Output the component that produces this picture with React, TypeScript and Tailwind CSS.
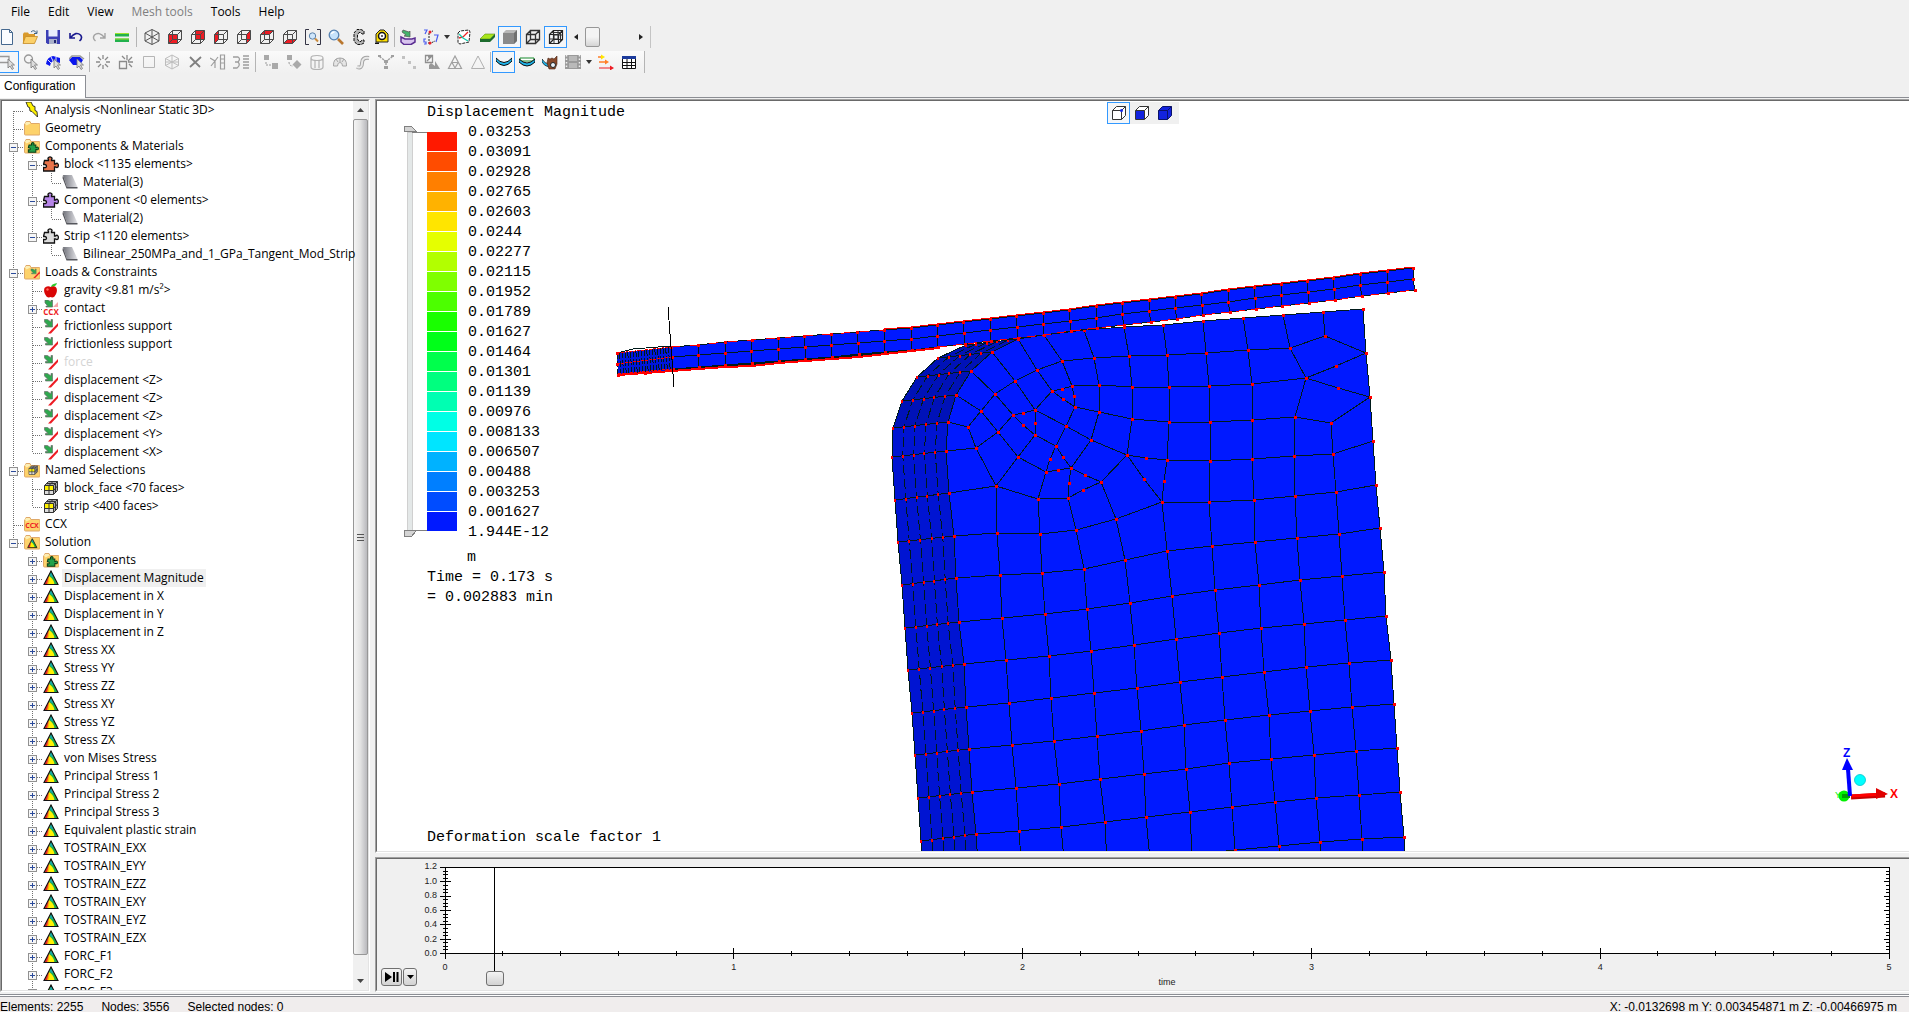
import type { ReactNode } from "react";

type TreeItem = {
    label: string;
    icon: string;
    open?: boolean;
    closed?: boolean;
    muted?: boolean;
    selected?: boolean;
    children?: TreeItem[];
};

type Tool = { icon?: string; label?: string; on?: boolean; sep?: "wide" | "tight"; drop?: boolean };

type Point = [number, number];

const ui = "font-['Open_Sans','Noto_Sans',sans-serif]";
const arial = "font-['Liberation_Sans',Arial,sans-serif]";
const mono = "font-['Liberation_Mono','Courier_New',monospace]";

const cubeWire = "M1.5 5.5h9v9h-9zM5.5 1.5h9v9h-9zM1.5 5.5l4-4M10.5 5.5l4-4M1.5 14.5l4-4M10.5 14.5l4-4";

function cube(face: string) {
    return (
        <>
            <path d={face} fill="#ed1c24" />
            <path d={cubeWire} fill="none" stroke="#4a4a4a" />
        </>
    );
}

function folder(mark?: ReactNode) {
    return (
        <>
            <path d="M1 3.5l1-2h4l1 2h8q1 0 1 1V14q0 1-1 1H1.500q-1 0-1-1V4z" fill="#fdd26b" stroke="#dfa86a" />
            <path d="M1 3.500l1-1.500h3.500l1 1.500-4 2z" fill="#fdeeb5" />
            {mark}
        </>
    );
}

const puzzlePath = "M1.500 4.500h4V3.500q-1-1 0-2 1.500-1.200 3 0 1 1 0 2v1h3v3.500h1q1.500-1.500 2.500 0 .8 1.500 0 3-1 1-2.500 0h-1v4h-11v-3.500h1q1.500.5 2-1 0-2-2-2h-1z";

function puzzle(fill: string) {
    return <path d={puzzlePath} fill={fill} stroke="#111" strokeWidth="1.300" />;
}

const constraint = (
    <>
        <path d="M1.500 1.500h3L8 4V1.500h1.500V9H2.500V7.500H5L1.500 4z" fill="#2fa84f" stroke="#6b6b6b" strokeWidth=".7" />
        <path d="M5 15.500L15 5v3L8 15.500z" fill="#ed1c24" />
    </>
);

const resultTriangle = (
    <>
        <path d="M8 1l7 13.500H1z" fill="#e8262a" />
        <path d="M8 1l7 13.500H4L6 5z" fill="#fbb40f" />
        <path d="M8 1l7 13.500H5q2-3 1-8z" fill="#fff200" />
        <path d="M8 1l7 13.500h-3.500Q11 9 6 6z" fill="#1fae4a" />
        <path d="M8 1l3 6Q9 8 6.500 5z" fill="#19a9a0" />
        <path d="M8 1l7 13.500H1z" fill="none" stroke="#111" strokeWidth="1.100" />
    </>
);

const blocks = (
    <>
        <path d="M1.500 5.500l4-4h9v9l-4 4h-9z" fill="#a8a8a8" stroke="#333" />
        <path d="M2 6h8v4.500H2z" fill="#fff200" />
        <path d="M2 10.500h8V14H2z" fill="#ddd" />
        <path d="M1.500 5.500h9v9M6 5.500v9M1.500 10.500h9l4-4.500M10.500 5.500l4-4M6 5.500l4-4M3.500 3.500h9V12" fill="none" stroke="#333" />
    </>
);

const cursor = <path d="M8 5v9l2-2 2 3.500 1.500-1-2-3.500h3z" fill="#ddd" stroke="#777" strokeWidth=".8" />;

const icons: Record<string, ReactNode> = {
    new: <path d="M2.500.5h8l3 3v12h-11zM10.500.5v3h3" fill="#fafcff" stroke="#45688f" />,
    open: (
        <>
            <path d="M1 5l1-1.500h4L7 5h6v9H1z" fill="#d99a2b" />
            <path d="M3.500 7.500h12l-3 7H1z" fill="#fbd069" stroke="#c48a26" strokeWidth=".8" />
            <path d="M9 3q3-3 5.500 1M15 1.500V4.500h-3" fill="none" stroke="#3f6385" />
        </>
    ),
    save: (
        <>
            <path d="M1 1h14v14H2.500L1 13.500z" fill="#3b3fb5" />
            <path d="M3.500 1h9v6.500h-9z" fill="#e8eefc" />
            <path d="M4 10h8v5H4z" fill="#a9b0c9" />
            <path d="M9 11h2v3H9z" fill="#20246f" />
        </>
    ),
    undo: <path d="M2 4v5h5M2.500 8.500Q8 2 12.500 6q2.500 3-1 6" fill="none" stroke="#1a1a8e" strokeWidth="1.600" />,
    redo: <path d="M14 4v5H9M13.500 8.500Q8 2 3.500 6q-2.500 3 1 6" fill="none" stroke="#a3a3a3" strokeWidth="1.400" />,
    equal: (
        <>
            <path d="M1 4h14v3.500H1zM1 9.500h14V13H1z" fill="#22b14c" />
            <path d="M1 4h14v1H1zM1 9.500h14v1H1z" fill="#9be22b" />
        </>
    ),
    iso: <path d="M8 .5l7 3.500v8L8 15.500 1 12V4zM8 .5v15M1 4l14 8M15 4L1 12" fill="none" stroke="#555" />,
    front: cube("M1.500 5.500h9v9h-9z"),
    back: cube("M5.500 1.500h9v9h-9z"),
    left: cube("M1.500 5.500l4-4v9l-4 4z"),
    right: cube("M10.500 5.500l4-4v9l-4 4z"),
    top: cube("M1.500 5.500l4-4h9l-4 4z"),
    bottom: cube("M1.500 14.500l4-4h9l-4 4z"),
    fit: (
        <>
            <path d="M4 .5H.500V15.500H4M12 .5h3.500V15.500H12" fill="none" stroke="#334" />
            <circle cx="7.500" cy="7" r="3.200" fill="#cfe6fb" stroke="#5c82ab" />
            <path d="M10 9.500l3 3" stroke="#c98a3c" strokeWidth="2" />
        </>
    ),
    zoom: (
        <>
            <circle cx="6" cy="6" r="4.800" fill="#c6e2fb" stroke="#5580b0" strokeWidth="1.300" />
            <path d="M3.500 5Q4 3 6.500 3" stroke="#fff" strokeWidth="1.500" fill="none" />
            <path d="M10 10l5 5" stroke="#b9772f" strokeWidth="2.600" />
        </>
    ),
    clamp: <path d="M13 5V2L10 .5H6L3 4v8l3 3.500h4l3-1.500v-3h-2l-1 1.500H8L6.500 10V6L8 3.500h2L11 5z" fill="#b5b5b5" stroke="#111" strokeDasharray="3 1" />,
    tape: (
        <>
            <path d="M2 13V5l4-4h4l4 4v8z" fill="#ffe000" stroke="#222" />
            <circle cx="8" cy="7" r="3.500" fill="#fff" stroke="#111" strokeWidth="1.500" />
            <circle cx="8" cy="7" r="1" fill="#333" />
            <path d="M1 13.500h4v1.500H1z" fill="#111" />
        </>
    ),
    section: (
        <>
            <path d="M1 8l4 2h7l3-1v4l-4 2.500H4L1 13z" fill="#d8c4ee" stroke="#5a2d91" strokeWidth="1.500" />
            <path d="M3 1l6 2 1-1v6L4 7l2-1-4-3z" fill="#43b26b" stroke="#555" strokeWidth=".7" />
        </>
    ),
    axes: (
        <>
            <path d="M6 15V3l4-1M6 15l6-3" fill="none" stroke="#222" strokeDasharray="2 1" />
            <path d="M1 1h3L2 5M3 10H1v3h2v2H1M11 6h4l-2 7" fill="none" stroke="#4a5cf0" strokeWidth="1.200" />
            <circle cx="7" cy="3" r="1.500" fill="#ed1c24" />
            <circle cx="7" cy="14" r="1.500" fill="#ed1c24" />
        </>
    ),
    graph: (
        <>
            <path d="M2 4l2-2 9-1 1 2-1 10-9 2-2-1z" fill="#fff" stroke="#222" strokeDasharray="3 1" />
            <path d="M3 9l4-1 5-5" stroke="#e22" fill="none" strokeWidth="1.300" />
            <path d="M3 5l4 4 5 3" stroke="#1ca" fill="none" strokeWidth="1.300" />
        </>
    ),
    slab: (
        <>
            <path d="M1 10l5-5h10l-5 5z" fill="#a8e61d" stroke="#5c8f10" strokeWidth=".6" />
            <path d="M1 10h10v3H1zM11 10l5-5v3l-5 5z" fill="#1d6b2e" />
        </>
    ),
    shaded: (
        <>
            <path d="M1 4l3-3h11v11l-3 3H1z" fill="#b8b8b8" />
            <path d="M1 4h11v11H1z" fill="#8a8a8a" />
            <path d="M12 4l3-3v11l-3 3z" fill="#6f6f6f" />
        </>
    ),
    wire: <path d={cubeWire} fill="none" stroke="#333" strokeWidth="1.300" />,
    meshcube: (
        <>
            <path d={cubeWire} fill="none" stroke="#222" strokeWidth="1.200" />
            <path d="M6 5.500v9M1.500 10h9M10 1.500v9M5.500 6h9M3.500 3.500h9v9" fill="none" stroke="#333" />
        </>
    ),
    selRect: (
        <>
            <path d="M0 2.500h9v6H0" fill="none" stroke="#999" strokeWidth="1.300" />
            {cursor}
        </>
    ),
    selCircle: (
        <>
            <circle cx="5.500" cy="5" r="4" fill="none" stroke="#999" strokeWidth="1.300" />
            {cursor}
        </>
    ),
    selStrip: (
        <>
            <path d="M0 10Q1 3 7 2l7 2v5L8 7q-3 0-4 5z" fill="#0b16ee" />
            <path d="M5 3l2 4M2 6l3 3M10 3v4" stroke="#dfe4ff" />
            {cursor}
        </>
    ),
    selSolid: (
        <>
            <path d="M0 6l3-3h8l3 3-3 5H4z" fill="#0b16ee" />
            <path d="M0 5l3-3h8l4 3" fill="none" stroke="#999" strokeWidth="1.500" />
            {cursor}
        </>
    ),
    burst: <path d="M8 1v4M8 11v4M1 8h4M11 8h4M3 3l3 3M10 10l3 3M13 3l-3 3M3 13l3-3" stroke="#8a8a8a" strokeWidth="1.300" />,
    burstBox: (
        <>
            <path d="M1.500 7.500h7v7h-7z" fill="none" stroke="#8a8a8a" strokeWidth="1.300" />
            <path d="M9 6V1M10 7l4-4M10 8h5M7 5L4 2M11 10l3 3" stroke="#8a8a8a" strokeWidth="1.300" />
        </>
    ),
    box: <path d="M2.500 2.500h11v11h-11z" fill="none" stroke="#b5b5b5" />,
    isoGrey: <path d="M8 1l6.500 3.500v7L8 15l-6.500-3.500v-7zM8 1v14M1.500 4.500l13 7M14.500 4.500l-13 7M1.500 8h13" fill="none" stroke="#bdbdbd" />,
    cross: <path d="M3 3l10 10M14 3L3 13" stroke="#808080" strokeWidth="1.800" />,
    align: <path d="M0 4l5 3-4 5M5 7l3-4M5 7v7M10.500 1v14h4V1zM11 5h3M11 9h3" fill="none" stroke="#9d9d9d" strokeWidth="1.200" />,
    spring: <path d="M0 3h5q3 2 0 5 3 3-1 6H0M2 8h4M10 2h6M10 5h6M10 8h6M10 11h6M10 14h6" fill="none" stroke="#9d9d9d" strokeWidth="1.300" />,
    stairs: (
        <>
            <path d="M1 1h5v5H1zM9 9h6v6H9z" fill="#a9a9a9" />
            <path d="M3 8v3h5" fill="none" stroke="#999" strokeDasharray="2 1" />
        </>
    ),
    rotateBox: (
        <>
            <path d="M1 1h5v5H1zM11 6l4.500 4.500L11 15l-4.500-4.500z" fill="#a9a9a9" />
            <path d="M3 8q0 4 4 4" fill="none" stroke="#999" strokeDasharray="2 1" />
        </>
    ),
    drum: <path d="M2 4q0-2.500 6-2.500T14 4t-6 2.500T2 4v9q0 2.500 6 2.500t6-2.500V4M6 7v7M10 7v7" fill="none" stroke="#b3b3b3" strokeWidth="1.200" />,
    arch: <path d="M1.500 12Q1 4 8 4t6.500 8h-4Q10.500 8.500 8 8.500T5.500 12zM4 5l2 3M12 5l-2 3M8 4v4" fill="#e5e5e5" stroke="#a6a6a6" />,
    snake: (
        <>
            <path d="M2 13q5 2 5-4t7-5" fill="none" stroke="#a3a3a3" strokeWidth="4" />
            <path d="M2 13q5 2 5-4t7-5" fill="none" stroke="#e8e8e8" strokeWidth="2" />
        </>
    ),
    merge: (
        <>
            <path d="M1 2l5 4M15 2l-5 4M8 15V8" stroke="#a0a0a0" strokeDasharray="3 1" strokeWidth="1.500" />
            <path d="M6 6h4v3H6zM0 1h3v2H0zM13 1h3v2h-3zM6 12h4v3H6z" fill="#a0a0a0" />
        </>
    ),
    dots: <path d="M1 2h3v3H1zM7 7h3v3H7zM12 12h3v3h-3z" fill="#c2c2c2" />,
    scale: (
        <>
            <path d="M1.500 1.500h7v7h-7zM3 7l4-4H4" fill="none" stroke="#8f8f8f" strokeWidth="1.300" />
            <path d="M7 9l4 3V7l5 8H5v-4z" fill="#999" />
        </>
    ),
    triangles: <path d="M8 2l6.500 12.500h-13zM5 8.500h6M8 14l-3-5.500M8 14l3-5.500" fill="none" stroke="#a0a0a0" strokeWidth="1.200" />,
    triangle: <path d="M8 2l6.500 12.500h-13z" fill="none" stroke="#b0b0b0" />,
    curve: <path d="M0 4q8 9 16 0v3q-8 9-16 0z" fill="#1fb5ec" stroke="#0a0a0a" />,
    curveOverlay: (
        <>
            <path d="M1 4h14v3H1z" fill="#fff" stroke="#178a2c" />
            <path d="M0 5q8 8 16 0v3q-8 8-16 0z" fill="#1fb5ec" stroke="#0a0a0a" />
        </>
    ),
    bull: (
        <>
            <path d="M0 5q3 5 7 5v3Q2 12 0 8z" fill="#1fb5ec" stroke="#111" strokeWidth=".7" />
            <path d="M6 4l2 1 2-1 2 1 3-3v8l-2 5H7L5 9z" fill="#87492b" stroke="#4a2413" strokeWidth=".6" />
            <circle cx="11" cy="11" r="2.500" fill="#e8f3fb" stroke="#222" />
        </>
    ),
    film: (
        <>
            <path d="M0 1h16v14H0z" fill="#9a9a9a" />
            <path d="M4 2h8v5H4zM4 9h8v5H4z" fill="#b9b9b9" />
            <path d="M1.500 1v14M14.500 1v14" stroke="#efefef" strokeWidth="1.500" strokeDasharray="1.500 2" />
        </>
    ),
    arrows: (
        <>
            <path d="M0 3h4M1 8h7" stroke="#ff7f27" strokeWidth="1.300" />
            <path d="M3 0.500L7 3 3 5.500z" fill="#ffe600" />
            <path d="M7 5.500L11 8l-4 2.500z" fill="#ff7f27" />
            <path d="M1 13.500h12v1H1zM12 11.500l4 2.500-4 2.500z" fill="#ed1c24" />
        </>
    ),
    table: (
        <>
            <path d="M1.500 2.500h13v12h-13z" fill="#fff" stroke="#111" />
            <path d="M1 2h14v3H1z" fill="#1d3c9c" />
            <path d="M1 8.500h14M1 11.500h14M6 5v9.500M10.500 5v9.500" stroke="#111" />
        </>
    ),
    bolt: <path d="M2 0h5l2 4 2 .5v4l2 1L13.500 15 8 9.500 6 9l-.5-3.500L4 5z" fill="#fff200" stroke="#222" strokeWidth=".9" />,
    folder: folder(),
    folderParts: folder(
        <g transform="translate(4 4) scale(.68)">
            <path d={puzzlePath} fill="#22a14a" stroke="#0b3d18" strokeWidth="1.500" />
        </g>,
    ),
    folderLoads: folder(<g transform="translate(6 4) scale(.65)">{constraint}</g>),
    folderSel: folder(<g transform="translate(4 3) scale(.65)">{blocks}</g>),
    folderCcx: folder(
        <text x="8" y="11.500" fontSize="7" fontWeight="bold" textAnchor="middle" fill="#ed1c24">CCX</text>,
    ),
    folderSolution: folder(<g transform="translate(3 4) scale(.66)">{resultTriangle}</g>),
    partOrange: puzzle("#e8734a"),
    partPurple: puzzle("#b685e8"),
    partGrey: puzzle("#dcdcdc"),
    material: (
        <>
            <path d="M1 1h9l5.500 12H5z" fill="url(#steel)" />
            <path d="M1 1l4 12h10.500v1.500H4.500L.500 4z" fill="#55565c" />
        </>
    ),
    apple: (
        <>
            <path d="M8 5Q8 2 14 1q-1 4-6 4z" fill="#2ecc2e" />
            <path d="M8 5q4-2 5.500 1 1.500 4-2 8.500-2 1.500-4 .5-2 1-4-.5Q0 10 1.500 6 4 3 8 5z" fill="#d90606" />
            <circle cx="4.500" cy="7.500" r="1.200" fill="#ff6a5c" />
        </>
    ),
    contact: (
        <>
            <path d="M10 7l5-5v5z" fill="#f6a5aa" />
            <path d="M2 0h3l3 2V0h1.500v7H3V6h2L2 3z" fill="#2fa84f" stroke="#6b6b6b" strokeWidth=".7" />
            <text x="8" y="15" fontSize="8" fontWeight="bold" textAnchor="middle" fill="#ed1c24">CCX</text>
        </>
    ),
    constraint,
    blocks,
    result: resultTriangle,
    viewWire: (
        <>
            <path d="M1.500 5.500l4-4h9v9l-4 4h-9zM1.500 5.500h9v9M10.500 5.500l4-4" fill="#fff" stroke="#333" />
            <circle cx="10.500" cy="5.500" r="1.500" fill="#1425e8" />
        </>
    ),
    viewFace: (
        <>
            <path d="M1.500 5.500l4-4h9v9l-4 4h-9z" fill="#fff" stroke="#333" />
            <path d="M2 6h8v8H2z" fill="#1222dd" />
            <path d="M1.500 5.500h9v9M10.500 5.500l4-4" fill="none" stroke="#333" />
        </>
    ),
    viewSolid: (
        <>
            <path d="M1.500 5.500l4-4h9v9l-4 4h-9z" fill="#1222dd" stroke="#0a1266" />
            <path d="M1.500 5.500h9v9M10.500 5.500l4-4" fill="none" stroke="#0a1266" />
        </>
    ),
};

function Icon({ name }: { name: string }) {
    return (
        <svg viewBox="0 0 16 16" className="size-4 shrink-0" aria-hidden="true">
            {icons[name]}
        </svg>
    );
}

const menus = ["File", "Edit", "View", "Mesh tools", "Tools", "Help"];

const viewTools: Tool[] = [
    { icon: "new", label: "New" },
    { icon: "open", label: "Open" },
    { icon: "save", label: "Save" },
    { icon: "undo", label: "Undo" },
    { icon: "redo", label: "Redo" },
    { icon: "equal", label: "Solve" },
    { sep: "wide" },
    { icon: "iso", label: "Isometric" },
    { icon: "front", label: "Front" },
    { icon: "back", label: "Back" },
    { icon: "left", label: "Left" },
    { icon: "right", label: "Right" },
    { icon: "top", label: "Top" },
    { icon: "bottom", label: "Bottom" },
    { icon: "fit", label: "Fit to window" },
    { icon: "zoom", label: "Zoom" },
    { icon: "clamp", label: "Caliper" },
    { icon: "tape", label: "Tape measure" },
    { sep: "tight" },
    { icon: "section", label: "Cutting plane" },
    { icon: "axes", label: "Coordinate system" },
    { drop: true, label: "Coordinate options" },
    { icon: "graph", label: "Local axes" },
    { icon: "slab", label: "Shell thickness" },
    { icon: "shaded", label: "Shaded", on: true },
    { icon: "wire", label: "Wireframe" },
    { icon: "meshcube", label: "Element edges", on: true },
];

const meshTools: Tool[] = [
    { icon: "selRect", label: "Rectangle select", on: true },
    { icon: "selCircle", label: "Circle select" },
    { icon: "selStrip", label: "Select faces" },
    { icon: "selSolid", label: "Select elements" },
    { sep: "tight" },
    { icon: "burst", label: "New node" },
    { icon: "burstBox", label: "New element" },
    { icon: "box", label: "Quad" },
    { icon: "isoGrey", label: "Hex" },
    { icon: "cross", label: "Delete" },
    { icon: "align", label: "Align" },
    { icon: "spring", label: "Spring" },
    { sep: "wide" },
    { icon: "stairs", label: "Move" },
    { icon: "rotateBox", label: "Rotate" },
    { icon: "drum", label: "Revolve" },
    { icon: "arch", label: "Hollow" },
    { icon: "snake", label: "Sweep" },
    { icon: "merge", label: "Merge nodes" },
    { icon: "dots", label: "Mirror" },
    { icon: "scale", label: "Scale" },
    { icon: "triangles", label: "Refine" },
    { icon: "triangle", label: "Coarsen" },
    { sep: "tight" },
    { icon: "curve", label: "Deformed", on: true },
    { icon: "curveOverlay", label: "Deformed and undeformed" },
    { icon: "bull", label: "True scale" },
    { icon: "film", label: "Animate" },
    { drop: true, label: "Animation options" },
    { icon: "arrows", label: "Vectors" },
    { icon: "table", label: "Table" },
];

const results = [
    "Displacement in X", "Displacement in Y", "Displacement in Z",
    "Stress XX", "Stress YY", "Stress ZZ", "Stress XY", "Stress YZ", "Stress ZX",
    "von Mises Stress", "Principal Stress 1", "Principal Stress 2", "Principal Stress 3",
    "Equivalent plastic strain",
    "TOSTRAIN_EXX", "TOSTRAIN_EYY", "TOSTRAIN_EZZ", "TOSTRAIN_EXY", "TOSTRAIN_EYZ", "TOSTRAIN_EZX",
    "FORC_F1", "FORC_F2", "FORC_F3",
];

const tree: TreeItem[] = [
    { label: "Analysis <Nonlinear Static 3D>", icon: "bolt" },
    { label: "Geometry", icon: "folder" },
    {
        label: "Components & Materials", icon: "folderParts", open: true,
        children: [
            { label: "block <1135 elements>", icon: "partOrange", open: true, children: [{ label: "Material(3)", icon: "material" }] },
            { label: "Component <0 elements>", icon: "partPurple", open: true, children: [{ label: "Material(2)", icon: "material" }] },
            { label: "Strip <1120 elements>", icon: "partGrey", open: true, children: [{ label: "Bilinear_250MPa_and_1_GPa_Tangent_Mod_Strip", icon: "material" }] },
        ],
    },
    {
        label: "Loads & Constraints", icon: "folderLoads", open: true,
        children: [
            { label: "gravity <9.81 m/s²>", icon: "apple" },
            { label: "contact", icon: "contact", closed: true },
            { label: "frictionless support", icon: "constraint" },
            { label: "frictionless support", icon: "constraint" },
            { label: "force", icon: "constraint", muted: true },
            { label: "displacement <Z>", icon: "constraint" },
            { label: "displacement <Z>", icon: "constraint" },
            { label: "displacement <Z>", icon: "constraint" },
            { label: "displacement <Y>", icon: "constraint" },
            { label: "displacement <X>", icon: "constraint" },
        ],
    },
    {
        label: "Named Selections", icon: "folderSel", open: true,
        children: [
            { label: "block_face <70 faces>", icon: "blocks" },
            { label: "strip <400 faces>", icon: "blocks" },
        ],
    },
    { label: "CCX", icon: "folderCcx" },
    {
        label: "Solution", icon: "folderSolution", open: true,
        children: [
            { label: "Components", icon: "folderParts", closed: true },
            { label: "Displacement Magnitude", icon: "result", closed: true, selected: true },
            ...results.map((label) => ({ label, icon: "result", closed: true })),
        ],
    },
];

const legend: [string, string][] = [
    ["0.03253", "#ff1900"],
    ["0.03091", "#ff4c00"],
    ["0.02928", "#ff7f00"],
    ["0.02765", "#ffb200"],
    ["0.02603", "#ffe500"],
    ["0.0244", "#e5ff00"],
    ["0.02277", "#b2ff00"],
    ["0.02115", "#7fff00"],
    ["0.01952", "#4cff00"],
    ["0.01789", "#19ff00"],
    ["0.01627", "#00ff19"],
    ["0.01464", "#00ff4c"],
    ["0.01301", "#00ff7f"],
    ["0.01139", "#00ffb2"],
    ["0.00976", "#00ffe5"],
    ["0.008133", "#00e5ff"],
    ["0.006507", "#00b2ff"],
    ["0.00488", "#007fff"],
    ["0.003253", "#004cff"],
    ["0.001627", "#0019ff"],
    ["1.944E-12", ""],
];

// Mesh coordinates are in window pixels; the model's viewBox starts at the canvas corner.
const pts = (s: string): Point[] => s.split(" ").map((p) => p.split(",").map(Number) as Point);
const str = (p: Point[]) => p.map((q) => q.join(",")).join(" ");
const mix = (a: Point, b: Point, t: number): Point => [a[0] + (b[0] - a[0]) * t, a[1] + (b[1] - a[1]) * t];

const blockBack = pts("966,345 938,358 917,377 902,401 893,428 892,457 895,500 898,542 902,585 905,628 908,670 912,713 915,755 918,798 921,841 924,884");
const blockFront = pts("1018,339 992,352 971,371 956,395 948,422 946,451 949,493 954,536 956,578 959,622 964,664 966,707 969,749 972,792 976,834 979,877");
const blockTop = pts("1018,339 1044,335 1084,330 1124,327 1163,325 1203,321 1243,318 1283,315 1323,312 1363,309");
const blockRight = pts("1363,309 1366,353 1370,397 1373,441 1376,485 1380,528 1384,572 1386,616 1391,660 1394,704 1397,748 1400,792 1404,837 1407,880");

const gridRows = [
    "954,536 997,533 1040,534 1076,530 1116,519 1162,502 1209,502 1254,500 1295,496 1336,492 1376,485",
    "956,578 1000,575 1042,573 1084,569 1125,560 1167,551 1212,546 1255,542 1297,538 1339,534 1380,528",
    "959,622 1002,618 1045,614 1087,609 1130,603 1172,596 1215,590 1259,585 1300,580 1342,576 1384,572",
    "964,664 1006,660 1049,656 1091,651 1134,645 1176,639 1219,633 1261,628 1304,624 1345,620 1386,616",
    "966,707 1009,703 1051,698 1094,693 1137,688 1180,682 1222,677 1264,672 1306,667 1349,663 1391,660",
    "969,749 1012,745 1054,741 1097,736 1141,731 1184,725 1225,720 1269,715 1310,711 1352,707 1394,704",
    "972,792 1016,788 1059,784 1100,779 1144,774 1186,769 1229,763 1271,759 1314,755 1356,751 1397,748",
    "976,834 1019,831 1061,827 1105,822 1146,817 1190,812 1232,807 1275,802 1316,798 1359,795 1400,792",
    "979,877 1022,874 1065,870 1107,865 1150,860 1192,855 1235,850 1279,846 1320,842 1362,839 1404,837",
    "982,920 1025,917 1068,913 1110,908 1153,903 1195,898 1238,893 1282,889 1323,885 1365,882 1407,880",
].map(pts);
const gridCols = gridRows[0].map((_, i) => gridRows.map((r) => r[i]));

const cornerMesh = [
    "992,352 1015,381 1035,410 1066,426 1091,440 1127,455 1146,458 1167,460 1210,461 1252,459 1294,456 1333,454 1373,441",
    "971,371 995,394 1013,415 1023,425 1035,435 1056,446 1063,457 1071,468 1085,475 1101,482 1116,519",
    "956,395 981,411 998,432 1018,457 1046,472 1058,470 1071,468",
    "948,422 968,427 976,448 996,486 1038,499 1068,498 1083,490 1101,482 1127,455",
    "946,451 976,448 998,432 1013,415 1023,413 1035,410 1052,391 1062,389 1072,386 1099,385 1132,387 1169,387 1209,386 1252,384 1306,378 1336,366 1366,353",
    "949,493 996,486 1018,457 1035,435 1035,423 1035,410",
    "968,427 981,411 995,394 1015,381 1037,370 1062,361 1094,358 1129,356 1167,355 1206,353 1248,350 1290,348 1325,336 1366,353",
    "1018,339 1037,370 1052,391 1063,399 1075,407 1099,412 1132,419 1169,422 1210,422 1252,420 1295,417 1331,423 1370,397",
    "1044,335 1062,361 1072,386 1074,396 1075,407 1066,426 1056,446 1050,459 1046,472 1038,499 1040,534",
    "1084,330 1094,358 1099,385 1099,412 1091,440 1071,468 1069,483 1068,498 1076,530",
    "1124,327 1129,356 1132,387 1132,419 1127,455 1144,479 1162,502",
    "1163,325 1167,355 1169,387 1169,422 1167,460 1164,481 1162,502",
    "1203,321 1206,353 1209,386 1210,422 1210,461 1209,502",
    "1243,318 1248,350 1252,384 1252,420 1252,459 1254,500",
    "1283,315 1290,348 1306,378 1295,417 1294,456 1295,496",
    "1323,312 1325,336",
    "1306,378 1338,388 1370,397",
    "1331,423 1333,454 1336,492",
    "996,486 997,533",
].map(pts);

const stripTop = pts("671,347 698,345 725,342 752,340 778,338 804,336 831,334 857,332 884,330 911,328 937,325 963,322 990,319 1016,316 1043,313 1069,310 1096,306 1122,303 1149,300 1175,297 1201,294 1228,290 1254,287 1281,284 1307,281 1333,278 1360,274 1387,271 1413,268");
const stripMid = pts("672,357 698,355 725,353 751,351 778,349 805,347 831,345 858,343 884,341 911,339 937,336 964,333 990,330 1017,327 1043,324 1070,321 1096,318 1122,314 1149,311 1175,308 1202,305 1228,302 1255,298 1281,295 1308,292 1334,289 1360,285 1387,282 1413,279");
const stripBottom = pts("673,369 699,367 725,365 752,363 779,361 805,359 832,357 859,354 885,352 912,350 938,347 965,344 991,341 1018,338 1044,335 1071,331 1097,328 1124,325 1151,322 1177,319 1203,315 1230,312 1256,309 1282,306 1309,303 1335,300 1362,296 1388,293 1415,290");
const stripUnder = pts("618,375 645,373 672,371 698,369 725,367 752,366 779,363 805,361 832,359 859,357 885,354 912,351 938,348");

const denseColumns = Array.from({ length: 21 }, (_, i) => i / 20);
const sideSteps = [0.2, 0.4, 0.6, 0.8];

function Node({ at }: { at: Point }) {
    return <rect x={Math.round(at[0]) - 1} y={Math.round(at[1]) - 1} width="3" height="3" fill="#ff0000" />;
}

function Line({ p, color = "#001a1a", dash }: { p: Point[]; color?: string; dash?: string }) {
    return <polyline points={str(p)} fill="none" stroke={color} strokeDasharray={dash} />;
}

function Model() {
    const frontNodes = [...blockFront, ...blockTop, ...blockRight, ...gridRows.flat(), ...cornerMesh.flat()];
    return (
        <svg
            viewBox="377 101 1532 750"
            width="1532"
            height="750"
            shapeRendering="crispEdges"
            className="absolute top-0 left-0"
            role="img"
            aria-label="Deformed mesh"
        >
            <polygon points={str([...blockBack, ...[...blockFront].reverse()])} fill="#0014d2" />
            <polygon points={str([...blockBack.slice(0, 5), ...blockFront.slice(0, 5).reverse()])} fill="#0012b8" />
            <polygon points={str([...blockTop, ...blockRight, ...[...blockFront].reverse()])} fill="#0019ff" />
            <Line p={blockBack} />
            {sideSteps.map((t) => (
                <Line key={t} p={blockBack.map((b, i) => mix(b, blockFront[i], t))} dash="10 4" />
            ))}
            {blockBack.map((b, i) => <Line key={i} p={[b, blockFront[i]]} />)}
            {[blockFront, blockTop, blockRight, ...gridRows, ...gridCols, ...cornerMesh].map((p, i) => <Line key={i} p={p} />)}
            {blockBack.map((b, i) => [0, ...sideSteps].map((t) => {
                const [x, y] = mix(b, blockFront[i], t);
                return <rect key={`${i}-${t}`} x={Math.round(x) - 1} y={Math.round(y) - 1} width="2" height="3" fill="#ff0000" />;
            }))}
            {frontNodes.map((n, i) => <Node key={i} at={n} />)}

            <polygon points={str([...stripTop, ...[...stripBottom].reverse()])} fill="#0019ff" />
            <polygon points="617,353 672,347 673,370 618,376" fill="#0016dc" />
            <polygon points={str([...stripBottom.slice(0, 11), ...stripUnder.slice(2).reverse()])} fill="#001a1a" />
            <Line p={[[617, 353], [633, 349], [671, 346]]} />
            <Line p={stripTop} />
            <Line p={stripMid} />
            <Line p={stripBottom} />
            {stripTop.map((p, i) => <Line key={i} p={[p, stripMid[i], stripBottom[i]]} />)}
            {denseColumns.map((t) => (
                <Line key={t} p={[mix([617, 353], [671, 347], t), mix([618, 375], [673, 370], t)]} dash="6 2" />
            ))}
            <Line p={[[617, 353], [671, 347]]} color="#ff0000" dash="3 1" />
            <Line p={[[617, 364], [672, 357]]} color="#ff0000" dash="3 1" />
            <Line p={[[618, 374], [673, 369]]} color="#ff0000" dash="3 1" />
            <Line p={stripTop.slice(0, 9)} color="#ff0000" dash="9 10" />
            <Line p={stripTop.slice(8).map(([x, y]) => [x, y - 1])} color="#ff0000" />
            <polyline points={str(stripUnder)} fill="none" stroke="#ff0000" strokeWidth="2" />
            <Line p={stripBottom.slice(10)} color="#ff0000" dash="9 6" />
            {[...stripTop, ...stripMid, ...stripBottom].map((n, i) => <Node key={i} at={n} />)}
            {([[617, 353], [617, 364], [618, 375], [645, 373]] as Point[]).map((n, i) => <Node key={i} at={n} />)}
            <Line p={[[668, 307], [674, 387]]} color="#000" />
        </svg>
    );
}

function Triad() {
    return (
        <svg viewBox="0 0 68 62" className="absolute right-2 bottom-[42px] h-[62px] w-[68px] overflow-visible" role="img" aria-label="Axes">
            <path d="M18 50l34-2" stroke="#c80000" strokeWidth="5" />
            <path d="M18 49l34-2" stroke="#ff0000" strokeWidth="3" />
            <path d="M43 41l12 6-12 5z" fill="#e00000" />
            <circle cx="11" cy="49" r="5.500" fill="#00f000" />
            <path d="M9 47h8v4H9z" fill="#00a000" />
            <path d="M17 49l-2-27" stroke="#0000ff" strokeWidth="4" />
            <path d="M9 23l5-12 6 12z" fill="#0000ff" />
            <circle cx="27" cy="33" r="5.500" fill="#00ffff" stroke="#00c4cc" strokeWidth=".8" />
            <g className={arial} fontSize="13">
                <text x="10" y="10" fill="#0000ff" fontWeight="bold" fontSize="12">Z</text>
                <text x="57" y="51" fill="#ff0000" fontWeight="bold" fontSize="12">X</text>
                <text x="2" y="51" fill="#00f000" fontSize="9">Y</text>
            </g>
        </svg>
    );
}

function Sunken({ className = "", children }: { className?: string; children: ReactNode }) {
    return (
        <div className={`flex min-h-0 border border-t-[#a0a0a0] border-r-white border-b-white border-l-[#a0a0a0] ${className}`}>
            <div className="relative flex min-h-0 min-w-0 flex-1 border border-t-[#696969] border-r-[#e3e3e3] border-b-[#e3e3e3] border-l-[#696969]">
                {children}
            </div>
        </div>
    );
}

function ToolButton({ tool }: { tool: Tool }) {
    if (tool.sep) return <div className={`h-5 w-px bg-[#b4b4b4] ${tool.sep === "wide" ? "mx-[3px]" : "mx-px"}`} />;
    if (tool.drop) {
        return (
            <button type="button" aria-label={tool.label} className="flex h-[22px] w-[10px] items-center justify-center">
                <svg viewBox="0 0 6 4" className="h-1 w-1.5"><path d="M0 0h6L3 4z" fill="#333" /></svg>
            </button>
        );
    }
    return (
        <button
            type="button"
            aria-label={tool.label}
            className={`flex h-[22px] w-[23px] shrink-0 items-center justify-center border ${tool.on ? "border-[#3399ff] bg-[#f4f6f8]" : "border-transparent"}`}
        >
            <Icon name={tool.icon ?? ""} />
        </button>
    );
}

function Guide({ from, to, branch }: { from: number; to: number; branch?: boolean }) {
    return (
        <svg width="19" height="18" className="shrink-0 overflow-visible" shapeRendering="crispEdges" aria-hidden="true">
            <path d={`M11.500 ${from}V${to}`} stroke="#707070" strokeDasharray="1 1" />
            {branch && <path d="M12 10.500H22" stroke="#707070" strokeDasharray="1 1" />}
        </svg>
    );
}

function TreeRow({ item, guides, first, last }: { item: TreeItem; guides: boolean[]; first: boolean; last: boolean }) {
    return (
        <li>
            <div className="flex h-[18px] items-center">
                {guides.map((on, i) => (on ? <Guide key={i} from={0} to={18} /> : <span key={i} className="w-[19px] shrink-0" />))}
                <span className="relative flex shrink-0">
                    <Guide from={first ? 10 : 0} to={last ? 10 : 18} branch />
                    {(item.open || item.closed) && (
                        <button
                            type="button"
                            aria-label={`${item.open ? "Collapse" : "Expand"} ${item.label}`}
                            className="absolute top-1.5 left-[7px] flex size-[9px] items-center justify-center border border-[#919191] bg-[#f6f6f6]"
                        >
                            <svg viewBox="0 0 5 5" className="size-[5px] shrink-0" shapeRendering="crispEdges">
                                <path d={item.open ? "M0 2.500h5" : "M0 2.500h5M2.500 0v5"} stroke="#2b4b9b" />
                            </svg>
                        </button>
                    )}
                </span>
                <span className="ml-[3px] flex shrink-0"><Icon name={item.icon} /></span>
                <span
                    className={`ml-[3px] h-[18px] px-0.5 leading-[17px] whitespace-nowrap ${item.selected ? "bg-[#f0f0f0]" : ""} ${item.muted ? "text-[#d4d4d4]" : ""}`}
                >
                    {item.label}
                </span>
            </div>
            {item.children && <TreeList items={item.children} guides={[...guides, !last]} />}
        </li>
    );
}

function TreeList({ items, guides = [] }: { items: TreeItem[]; guides?: boolean[] }) {
    return (
        <ul>
            {items.map((item, i) => (
                <TreeRow
                    key={i}
                    item={item}
                    guides={guides}
                    first={guides.length === 0 && i === 0}
                    last={i === items.length - 1}
                />
            ))}
        </ul>
    );
}

function TreeScrollbar() {
    return (
        <div className="flex w-[15px] shrink-0 flex-col bg-[#f0f0f0]">
            <button type="button" aria-label="Scroll up" className="flex h-[18px] items-center justify-center">
                <svg viewBox="0 0 7 4" className="h-1 w-[7px]"><path d="M0 4h7L3.500 0z" fill="#444" /></svg>
            </button>
            <div className="flex flex-1 flex-col items-center justify-center gap-0.5 rounded-xs border border-[#979797] bg-linear-to-r from-[#f4f4f4] via-[#e2e2e2] to-[#b9b9bd]">
                <span className="h-px w-[7px] bg-[#555]" />
                <span className="h-px w-[7px] bg-[#555]" />
                <span className="h-px w-[7px] bg-[#555]" />
            </div>
            <button type="button" aria-label="Scroll down" className="mt-[17px] flex h-[18px] items-center justify-center">
                <svg viewBox="0 0 7 4" className="h-1 w-[7px]"><path d="M0 0h7L3.500 4z" fill="#444" /></svg>
            </button>
        </div>
    );
}

function Legend() {
    return (
        <div className={`relative flex flex-col pt-0.5 text-[15px] leading-5 ${mono}`}>
            <div className="pl-[50px]">Displacement Magnitude</div>
            <div className="flex">
                <svg width="50" height="416" shapeRendering="crispEdges" className="mt-0.5" aria-hidden="true">
                    <rect x="30" y="7" width="5" height="400" fill="#e4e8e8" stroke="#d0d0d0" />
                    <path d="M35 7.500h15M35 405.500h15" stroke="#808080" />
                    <path d="M27.500 1.500h7l5 5h-12zM27.500 405.500h12l-5 6h-7z" fill="#d4d4d4" stroke="#808080" />
                </svg>
                <div className="mt-[9px] flex w-[30px] flex-col gap-px">
                    {legend.slice(0, 20).map(([v, color]) => (
                        <div key={v} className="h-[19px]" style={{ backgroundColor: color }} />
                    ))}
                </div>
                <div className="ml-[11px]">
                    {legend.map(([v]) => <div key={v}>{v}</div>)}
                </div>
            </div>
            <div className="pt-[5px] pl-[90px]">m</div>
            <div className="pl-[50px]">Time = 0.173 s</div>
            <div className="pl-[50px]">= 0.002883 min</div>
        </div>
    );
}

const yTicks = Array.from({ length: 25 }, (_, i) => ({ y: Math.round((86 * i) / 24) + 0.5, major: i % 4 === 0 }));
const xTicks = Array.from({ length: 26 }, (_, i) => ({ x: `${i * 4}%`, major: i % 5 === 0, label: i / 5 }));

function Timeline() {
    return (
        <Sunken className="-mr-0.5 h-[135px] shrink-0">
            <div className={`flex flex-1 pt-2 pr-5 text-[9px] leading-[14px] text-[#222] ${arial}`}>
                <div className="flex w-[68px] shrink-0 flex-col justify-between">
                    <div className="-mt-2 flex h-[101px] flex-col justify-between pr-2 text-right">
                        {["1.2", "1.0", "0.8", "0.6", "0.4", "0.2", "0.0"].map((v) => <span key={v}>{v}</span>)}
                    </div>
                    <div className="flex gap-px pb-1 pl-1">
                        <button type="button" aria-label="Play or pause" className="flex h-[18px] w-[21px] items-center justify-center rounded-[3px] border border-[#707070] bg-linear-to-b from-[#f4f4f4] to-[#d2d2d2]">
                            <svg viewBox="0 0 14 10" className="h-2.5 w-3.5"><path d="M0 0l7 5-7 5zM8 0h2v10H8zM11.500 0h2v10h-2z" fill="#000" /></svg>
                        </button>
                        <button type="button" aria-label="Playback options" className="flex h-[18px] w-[14px] items-center justify-center rounded-[3px] border border-[#707070] bg-linear-to-b from-[#f4f4f4] to-[#d2d2d2]">
                            <svg viewBox="0 0 7 4" className="h-1 w-[7px]"><path d="M0 0h7L3.500 4z" fill="#000" /></svg>
                        </button>
                    </div>
                </div>
                <div className="relative min-w-0 flex-1">
                    <svg width="100%" height="120" className="block overflow-visible" shapeRendering="crispEdges" role="img" aria-label="Time axis">
                        <rect x="0" y="0" width="100%" height="86" fill="#fff" />
                        <g stroke="#000">
                            <line x1="0" x2="100%" y1=".5" y2=".5" />
                            <line x1="0" x2="100%" y1="86.500" y2="86.500" />
                            <line x1="0" x2="0" y1="0" y2="92" />
                            <line x1="100%" x2="100%" y1="0" y2="92" />
                            {yTicks.map((t) => (
                                <line key={t.y} x1={t.major ? -5 : -2} x2={t.major ? 6 : 3} y1={t.y} y2={t.y} />
                            ))}
                            <svg x="100%" className="overflow-visible">
                                {yTicks.map((t) => <line key={t.y} x1={t.major ? -5 : -3} x2="0" y1={t.y} y2={t.y} />)}
                            </svg>
                            {xTicks.map((t) => (
                                <line key={t.x} x1={t.x} x2={t.x} y1={t.major ? 81 : 84} y2={t.major ? 92 : 89} />
                            ))}
                            <line x1="3.460%" x2="3.460%" y1="0" y2="104" />
                        </g>
                        <g textAnchor="middle" fill="#222">
                            {xTicks.filter((t) => t.major).map((t) => <text key={t.x} x={t.x} y="103">{t.label}</text>)}
                            <text x="50%" y="118">time</text>
                        </g>
                    </svg>
                    <button type="button" aria-label="Time position" className="absolute top-[104px] left-[3.460%] h-[15px] w-[18px] -translate-x-1/2 rounded-[3px] border border-[#707070] bg-linear-to-b from-[#f4f4f4] to-[#d2d2d2]" />
                </div>
            </div>
        </Sunken>
    );
}

export default function App() {
    return (
        <div className={`flex h-screen flex-col overflow-hidden bg-[#f0f0f0] text-black ${ui}`}>
            <svg className="absolute size-0" aria-hidden="true">
                <linearGradient id="steel" x1="0" x2="1">
                    <stop offset="0" stopColor="#70727a" />
                    <stop offset="1" stopColor="#e6e6ea" />
                </linearGradient>
            </svg>
            <nav className="flex h-[26px] shrink-0 items-start pl-0.5 text-[12px] leading-6">
                {menus.map((m) => (
                    <button key={m} type="button" className={`px-[9px] ${m === "Mesh tools" ? "text-[#7f7f7f]" : ""}`}>{m}</button>
                ))}
            </nav>

            <div className="-ml-[5px] flex h-[22px] shrink-0 items-center">
                {viewTools.map((t, i) => <ToolButton key={i} tool={t} />)}
                <div className="flex h-[22px] items-center border-r border-[#c4c4c4]">
                    <button type="button" aria-label="Less" className="flex w-[18px] justify-center">
                        <svg viewBox="0 0 4 6" className="h-1.5 w-1"><path d="M4 0v6L0 3z" fill="#222" /></svg>
                    </button>
                    <span className="h-5 w-[15px] rounded-xs border border-[#979797] bg-linear-to-b from-[#f4f4f4] from-50% to-[#d4d4d4]" />
                    <button type="button" aria-label="More" className="ml-8 flex w-[18px] justify-center">
                        <svg viewBox="0 0 4 6" className="h-1.5 w-1"><path d="M0 0v6l4-3z" fill="#222" /></svg>
                    </button>
                </div>
            </div>
            <div className="mt-[3px] -ml-1 flex h-[22px] w-fit shrink-0 items-center border-r border-[#b4b4b4] bg-linear-to-b from-[#fafafa] to-[#f0f0f0] pr-1">
                {meshTools.map((t, i) => <ToolButton key={i} tool={t} />)}
            </div>

            <div className={`mt-0.5 flex h-[23px] shrink-0 text-[12px] ${arial}`} role="tablist">
                <button type="button" role="tab" aria-selected="true" className="w-[86px] border-t border-r border-[#8c8e94] bg-white pb-0.5 pl-1 text-left">
                    Configuration
                </button>
                <div className="flex-1 border-b border-[#8c8e94]" />
            </div>

            <main className="mt-px flex min-h-0 flex-1 gap-[5px]">
                <Sunken className="w-[370px] shrink-0">
                    <div className="flex min-w-0 flex-1 bg-white text-[12px]">
                        <div className="relative z-10 min-w-0 flex-1 overflow-x-visible overflow-y-clip">
                            <TreeList items={tree} />
                        </div>
                        <TreeScrollbar />
                    </div>
                </Sunken>
                <div className="flex min-w-0 flex-1 flex-col gap-1">
                    <Sunken className="-mr-0.5 flex-1">
                        <div className="relative flex flex-1 flex-col justify-between overflow-hidden bg-white">
                            <Model />
                            <Legend />
                            <div className={`relative pb-[3px] pl-[50px] text-[15px] leading-5 ${mono}`}>Deformation scale factor 1</div>
                            <div className="absolute top-px left-1/2 flex -translate-x-1/2 bg-[#f0f0f0] pr-[3px]">
                                <ToolButton tool={{ icon: "viewWire", label: "Select nodes", on: true }} />
                                <ToolButton tool={{ icon: "viewFace", label: "Select faces" }} />
                                <ToolButton tool={{ icon: "viewSolid", label: "Select elements" }} />
                            </div>
                            <Triad />
                        </div>
                    </Sunken>
                    <Timeline />
                </div>
            </main>

            <footer className={`mt-0.5 flex h-[18px] shrink-0 flex-col text-[12px] ${arial}`}>
                <div className="h-[3px] shrink-0 border-y border-[#8c8e94] bg-white" />
                <div className="flex min-h-0 flex-1 gap-[18px] bg-[#f0eded] pr-3 leading-[21px]">
                    <span>Elements: 2255</span>
                    <span>Nodes: 3556</span>
                    <span>Selected nodes: 0</span>
                    <span className="ml-auto">X: -0.0132698 m Y: 0.003454871 m Z: -0.00466975 m</span>
                </div>
            </footer>
        </div>
    );
}
